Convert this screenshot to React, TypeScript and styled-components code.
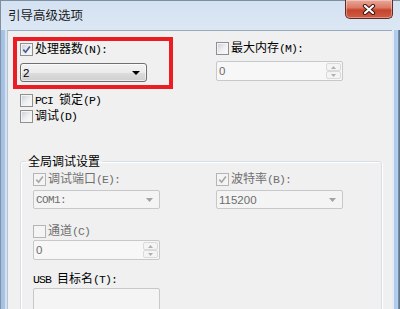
import React from 'react';
import styled, { createGlobalStyle } from 'styled-components';

const GlobalStyle = createGlobalStyle`
  html, body {
    margin: 0;
    padding: 0;
  }
  body {
    width: 400px;
    height: 309px;
    overflow: hidden;
    font-family: "Noto Sans CJK SC", "Noto Sans", sans-serif;
  }
`;

const Window = styled.div`
  width: 400px;
  height: 309px;
  display: flex;
  flex-direction: column;
  background: linear-gradient(#d3e1f1, #dce7f4 30px);
  box-shadow: inset 1px 1px 0 #7f8fa2;
  overflow: hidden;
`;

const TitleBar = styled.div`
  height: 30px;
  flex: none;
  display: flex;
  justify-content: space-between;
`;

const Title = styled.div`
  padding-left: 8px;
  line-height: 30px;
  font-size: 12.5px;
  color: #1b1b1b;
`;

const CloseBtn = styled.div`
  width: 48px;
  height: 19px;
  margin-right: 7px;
  box-sizing: border-box;
  border: 1px solid #5e2b25;
  border-top: none;
  border-radius: 0 0 5px 5px;
  background: linear-gradient(#e9a898 0%, #dc7a66 42%, #c6442d 56%, #cd5d44 100%);
  box-shadow: inset 0 0 0 1px rgba(255, 255, 255, 0.35);
  display: flex;
  align-items: center;
  justify-content: center;
`;

const Body = styled.div`
  flex: 1;
  display: flex;
  min-height: 0;
`;

const FrameEdge = styled.div<{ $side: 'left' | 'right' }>`
  flex: none;
  width: ${p => (p.$side === 'left' ? '7px' : '8px')};
  background: ${p =>
    p.$side === 'left'
      ? 'linear-gradient(to right, #7d93b0 0, #7d93b0 1px, #a4bfdf 1px, #abc5e3 5px, #d3e0ef 5px)'
      : 'linear-gradient(to right, #e4ecf5 0, #e4ecf5 2px, #adc9ea 2px, #b6d0ec 6px, #8aa3c1 6px, #5f7590 7px)'};
`;

const Client = styled.div`
  flex: 1;
  background: #f0f0f0;
  border-top: 1px solid #98aac0;
  border-left: 1px solid #b4c4d6;
  padding: 6px 0 0 12px;
  overflow: hidden;
`;

const TopRow = styled.div`
  display: grid;
  grid-template-columns: 196px 1fr;
`;

const RedBox = styled.div`
  margin-left: -7px;
  width: 160px;
  box-sizing: border-box;
  border: 4px solid #ec1c24;
  padding: 0 0 3px 3px;
`;

const RightCell = styled.div`
  padding-top: 3px;
`;

const Row = styled.div<{ $mt?: number }>`
  display: flex;
  align-items: center;
  gap: 2px;
  height: 16px;
  margin-top: ${p => p.$mt ?? 0}px;
`;

const Label = styled.span<{ $disabled?: boolean }>`
  font-size: 12px;
  line-height: 16px;
  white-space: nowrap;
  color: ${p => (p.$disabled ? '#6f6f6f' : '#000')};
`;

const Mn = styled.span`
  font-family: "Liberation Mono", monospace;
  font-size: 11.5px;
  letter-spacing: -0.9px;
`;

const Box = styled.span<{ $disabled?: boolean }>`
  width: 13px;
  height: 13px;
  flex: none;
  box-sizing: border-box;
  border: 1px solid ${p => (p.$disabled ? '#b5b5b5' : '#8e8f8f')};
  background: ${p =>
    p.$disabled ? '#f4f4f4' : 'linear-gradient(135deg, #c9ced5 0%, #eef0f2 55%, #fbfbfb 100%)'};
  box-shadow: inset 0 0 0 1px #f4f4f4;
  display: flex;
  align-items: center;
  justify-content: center;
`;

const Combo = styled.div<{ $disabled?: boolean; $mt?: number }>`
  width: 127px;
  height: 19px;
  margin-top: ${p => p.$mt ?? 0}px;
  box-sizing: border-box;
  display: flex;
  align-items: center;
  justify-content: space-between;
  padding: 0 6px 0 2px;
  border: 1px solid ${p => (p.$disabled ? '#c5c9cc' : '#707070')};
  border-radius: ${p => (p.$disabled ? '2px' : '3px')};
  background: ${p =>
    p.$disabled
      ? '#f4f4f4'
      : 'linear-gradient(#f3f3f3 0%, #ebebeb 50%, #dddddd 51%, #cfcfcf 100%)'};
  color: ${p => (p.$disabled ? '#6d6d6d' : '#000')};
  box-shadow: ${p => (p.$disabled ? 'none' : 'inset 0 0 0 1px rgba(255,255,255,0.6)')};
`;

const Value = styled.span<{ $mono?: boolean }>`
  font-family: ${p => (p.$mono ? '"Liberation Mono", monospace' : '"Liberation Sans", Arial, sans-serif')};
  font-size: ${p => (p.$mono ? '11px' : '11.5px')};
  letter-spacing: ${p => (p.$mono ? '-0.6px' : '0')};
  line-height: 16px;
`;

const Spin = styled.div<{ $mt?: number }>`
  width: 127px;
  height: 20px;
  margin-top: ${p => p.$mt ?? 0}px;
  box-sizing: border-box;
  display: flex;
  align-items: stretch;
  justify-content: space-between;
  padding: 1px 1px 1px 2px;
  border: 1px solid #c5c9cc;
  border-radius: 2px;
  background: #f7f7f7;
  color: #6d6d6d;
`;

const SpinButtons = styled.div`
  width: 15px;
  display: flex;
  flex-direction: column;
`;

const SpinBtn = styled.div`
  flex: 1;
  border: 1px solid #dadada;
  border-radius: 2px;
  background: #f4f4f4;
  display: flex;
  align-items: center;
  justify-content: center;
`;

const TextBox = styled.div<{ $mt?: number }>`
  width: 127px;
  height: 40px;
  margin-top: ${p => p.$mt ?? 0}px;
  box-sizing: border-box;
  border: 1px solid #c5c9cc;
  border-radius: 2px;
  background: #f4f4f4;
`;

const Group = styled.fieldset`
  margin: 29px 0 0 0;
  width: 362px;
  min-width: 0;
  box-sizing: border-box;
  padding: 2px 0 20px 12px;
  border: 1px solid #d5dfe5;
  border-radius: 3px;
  box-shadow: inset 1px 1px 0 #fff, 1px 1px 0 #fff;
`;

const Legend = styled.legend`
  margin-left: -7px;
  padding: 0 2px;
  font-size: 12px;
  line-height: 16px;
  color: #000;
`;

const GroupGrid = styled.div`
  display: grid;
  grid-template-columns: 183px 1fr;
`;

const Col = styled.div``;

const Check = ({ checked, disabled }: { checked?: boolean; disabled?: boolean }) => (
  <Box $disabled={disabled}>
    {checked && (
      <svg width="9" height="9" viewBox="0 0 9 9">
        <path
          d="M1.3 4.6 L3.6 7.2 L7.9 1.4"
          fill="none"
          stroke={disabled ? '#a8a8a8' : '#4b5f96'}
          strokeWidth="1.7"
        />
      </svg>
    )}
  </Box>
);

const Arrow = ({ disabled }: { disabled?: boolean }) =>
  disabled ? (
    <svg width="7" height="4" viewBox="0 0 7 4">
      <polygon points="0,0 7,0 3.5,4" fill="#a3a3a3" />
    </svg>
  ) : (
    <svg width="8" height="4" viewBox="0 0 8 4">
      <polygon points="0,0 8,0 4,4" fill="#000" />
    </svg>
  );

const Tri = ({ up }: { up?: boolean }) => (
  <svg width="5" height="3" viewBox="0 0 5 3">
    <polygon points={up ? '0,3 5,3 2.5,0' : '0,0 5,0 2.5,3'} fill="#b0b0b0" />
  </svg>
);

const SpinBox = ({ mt }: { mt?: number }) => (
  <Spin $mt={mt}>
    <Value>0</Value>
    <SpinButtons>
      <SpinBtn>
        <Tri up />
      </SpinBtn>
      <SpinBtn>
        <Tri />
      </SpinBtn>
    </SpinButtons>
  </Spin>
);

export default function App() {
  return (
    <Window>
      <GlobalStyle />
      <TitleBar>
        <Title>引导高级选项</Title>
        <CloseBtn>
          <svg width="14" height="11" viewBox="0 0 14 11">
            <path d="M3 2 L11 9 M11 2 L3 9" stroke="#3a1712" strokeWidth="4.2" strokeLinecap="round" />
            <path d="M3 2 L11 9 M11 2 L3 9" stroke="#fff" strokeWidth="2.2" strokeLinecap="round" />
          </svg>
        </CloseBtn>
      </TitleBar>
      <Body>
        <FrameEdge $side="left" />
        <Client>
          <TopRow>
            <RedBox>
              <Row>
                <Check checked />
                <Label>
                  处理器数<Mn>(N):</Mn>
                </Label>
              </Row>
              <Combo $mt={6}>
                <Value>2</Value>
                <Arrow />
              </Combo>
            </RedBox>
            <RightCell>
              <Row>
                <Check />
                <Label>
                  最大内存<Mn>(M):</Mn>
                </Label>
              </Row>
              <SpinBox mt={5} />
            </RightCell>
          </TopRow>
          <Row $mt={3}>
            <Check />
            <Label>
              <Mn>PCI </Mn>锁定<Mn>(P)</Mn>
            </Label>
          </Row>
          <Row>
            <Check />
            <Label>
              调试<Mn>(D)</Mn>
            </Label>
          </Row>
          <Group>
            <Legend>全局调试设置</Legend>
            <GroupGrid>
              <Col>
                <Row>
                  <Check checked disabled />
                  <Label $disabled>
                    调试端口<Mn>(E):</Mn>
                  </Label>
                </Row>
                <Combo $disabled $mt={3}>
                  <Value $mono>COM1:</Value>
                  <Arrow disabled />
                </Combo>
                <Row $mt={14}>
                  <Check disabled />
                  <Label $disabled>
                    通道<Mn>(C)</Mn>
                  </Label>
                </Row>
                <SpinBox mt={1} />
                <Row $mt={11}>
                  <Label>
                    <Mn>USB </Mn>目标名<Mn>(T):</Mn>
                  </Label>
                </Row>
                <TextBox $mt={1} />
              </Col>
              <Col>
                <Row>
                  <Check checked disabled />
                  <Label $disabled>
                    波特率<Mn>(B):</Mn>
                  </Label>
                </Row>
                <Combo $disabled $mt={3}>
                  <Value>115200</Value>
                  <Arrow disabled />
                </Combo>
              </Col>
            </GroupGrid>
          </Group>
        </Client>
        <FrameEdge $side="right" />
      </Body>
    </Window>
  );
}
